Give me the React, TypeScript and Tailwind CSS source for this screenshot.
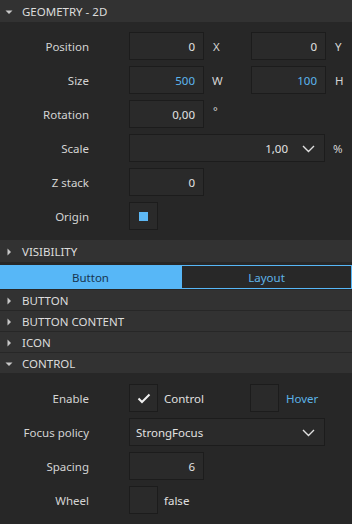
import React from "react";

const font = { fontFamily: '"Noto Sans", "Open Sans", sans-serif' };

function Tri({ open }: { open: boolean }) {
  return open ? (
    <svg width="8" height="6" viewBox="0 0 8 6" className="ml-[5px]">
      <polygon points="0.5,1.5 7.5,1.5 4,5" fill="#c8c8c8" />
    </svg>
  ) : (
    <svg width="8" height="8" viewBox="0 0 8 8" className="ml-[5px]">
      <polygon points="2.5,0.5 6,4 2.5,7.5" fill="#c8c8c8" />
    </svg>
  );
}

function Header({ title, open, h = "h-[21px]" }: { title: string; open: boolean; h?: string }) {
  return (
    <div className={`${h} bg-[#323232] flex items-center text-[11.5px] text-[#dcdcdc]`}>
      <div className="w-[22px] flex items-center pt-px">
        <Tri open={open} />
      </div>
      <span className="leading-none pt-[2px]">{title}</span>
    </div>
  );
}

function Label({ children }: { children: React.ReactNode }) {
  return (
    <div className="w-[89px] text-right text-[11.5px] text-[#d4d4d4] shrink-0 leading-none pt-[2px]">
      {children}
    </div>
  );
}

function Box({ className = "", children }: { className?: string; children?: React.ReactNode }) {
  return (
    <div
      className={`h-[28px] border border-[#1c1c1c] bg-[#2a2a2a] flex items-center text-[11.5px] text-[#e2e2e2] pt-px ${className}`}
    >
      {children}
    </div>
  );
}

function Chevron() {
  return (
    <svg width="13" height="8" viewBox="0 0 13 8">
      <polyline points="1,1 6.5,6.5 12,1" fill="none" stroke="#e0e0e0" strokeWidth="1.4" />
    </svg>
  );
}

function Check() {
  return (
    <svg width="14" height="11" viewBox="0 0 14 11">
      <polyline points="1.5,5.5 5,9 12.5,1.5" fill="none" stroke="#f0f0f0" strokeWidth="2" />
    </svg>
  );
}

function Row({ label, children }: { label: string; children: React.ReactNode }) {
  return (
    <div className="h-[28px] flex items-center">
      <Label>{label}</Label>
      <div className="ml-[40px] flex items-center">{children}</div>
    </div>
  );
}

const side = "text-[11.5px] text-[#d4d4d4] pt-[2px]";

export default function App() {
  return (
    <div style={font} className="w-[352px] h-[524px] bg-[#272727] overflow-hidden flex flex-col">
      <Header title="GEOMETRY - 2D" open h="h-[22px]" />
      <div className="flex flex-col gap-[6px] pt-[10px] pb-[10px]">
        <Row label="Position">
          <Box className="w-[75px] justify-end pr-[8px]">0</Box>
          <span className={`w-[47px] pl-[9px] ${side}`}>X</span>
          <Box className="w-[75px] justify-end pr-[8px]">0</Box>
          <span className={`pl-[9px] ${side}`}>Y</span>
        </Row>
        <Row label="Size">
          <Box className="w-[75px] justify-end pr-[8px] !text-[#5cb6ee]">500</Box>
          <span className={`w-[47px] pl-[8px] ${side}`}>W</span>
          <Box className="w-[75px] justify-end pr-[8px] !text-[#5cb6ee]">100</Box>
          <span className={`pl-[9px] ${side}`}>H</span>
        </Row>
        <Row label="Rotation">
          <Box className="w-[75px] justify-end pr-[8px]">0,00</Box>
          <span className="pl-[9px] text-[11px] text-[#d4d4d4] -mt-[5px]">°</span>
        </Row>
        <Row label="Scale">
          <Box className="w-[196px] justify-end pr-[9px]">
            <span>1,00</span>
            <span className="ml-[14px] flex items-center">
              <Chevron />
            </span>
          </Box>
          <span className={`pl-[8px] ${side}`}>%</span>
        </Row>
        <Row label="Z stack">
          <Box className="w-[75px] justify-end pr-[8px]">0</Box>
        </Row>
        <Row label="Origin">
          <Box className="w-[29px] justify-center !pt-0">
            <div className="w-[9px] h-[9px] bg-[#5db8f5]" />
          </Box>
        </Row>
      </div>
      <Header title="VISIBILITY" open={false} h="h-[22px]" />
      <div className="h-[3px]" />
      <div className="h-[24px] flex text-[11.5px]">
        <div className="w-[181px] bg-[#57b7f7] flex items-center justify-center text-[#173550] pt-px">Button</div>
        <div className="flex-1 border border-[#57b7f7] bg-[#282828] flex items-center justify-center text-[#5fb4e8] pt-px">
          Layout
        </div>
      </div>
      <div className="h-px" />
      <Header title="BUTTON" open={false} h="h-[20px]" />
      <div className="h-px" />
      <Header title="BUTTON CONTENT" open={false} h="h-[20px]" />
      <div className="h-px" />
      <Header title="ICON" open={false} h="h-[20px]" />
      <div className="h-px" />
      <Header title="CONTROL" open h="h-[20px]" />
      <div className="flex flex-col gap-[6px] pt-[11px]">
        <Row label="Enable">
          <Box className="w-[29px] justify-center !pt-0">
            <Check />
          </Box>
          <span className="w-[92px] pl-[6px] text-[11.5px] text-[#e0e0e0] pt-[2px]">Control</span>
          <Box className="w-[29px]" />
          <span className="pl-[7px] text-[11.5px] text-[#5cb3e8] pt-[2px]">Hover</span>
        </Row>
        <Row label="Focus policy">
          <Box className="w-[196px] justify-between pl-[6px] pr-[9px]">
            <span>StrongFocus</span>
            <Chevron />
          </Box>
        </Row>
        <Row label="Spacing">
          <Box className="w-[75px] justify-end pr-[8px]">6</Box>
        </Row>
        <Row label="Wheel">
          <Box className="w-[29px]" />
          <span className="pl-[6px] text-[11.5px] text-[#e0e0e0] pt-[2px]">false</span>
        </Row>
      </div>
    </div>
  );
}
